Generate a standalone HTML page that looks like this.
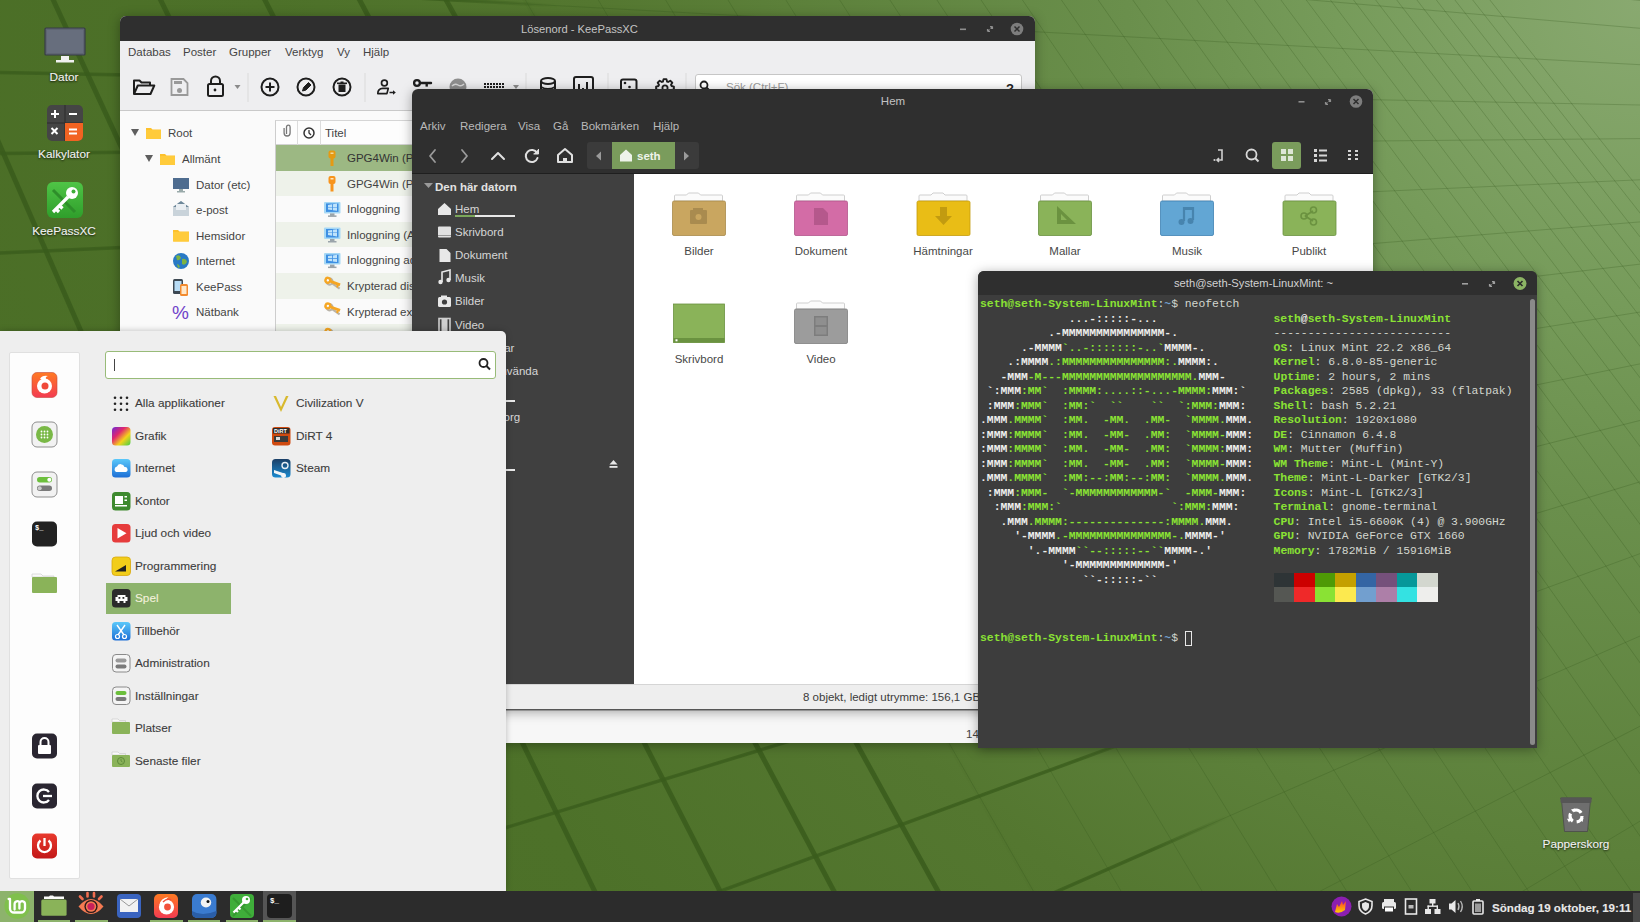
<!DOCTYPE html>
<html><head><meta charset="utf-8">
<style>
*{box-sizing:border-box;margin:0;padding:0}
html,body{width:1640px;height:922px;overflow:hidden}
body{position:relative;font-family:"Liberation Sans",sans-serif;font-size:11.5px;background:#55802f}
.a{position:absolute}
.t{position:absolute;white-space:nowrap;line-height:1}
/* desktop */
#bg{left:0;top:0;width:1640px;height:922px;background:linear-gradient(200deg,#86a86a 0%,#6a9148 22%,#588535 45%,#4f7a2b 70%,#4b7528 100%)}
.dlabel{position:absolute;color:#f2f2f2;text-shadow:0 1px 2px #000c;font-size:11.8px;text-align:center;width:100px;margin-top:1.5px}
/* windows */
.win{position:absolute;overflow:hidden;border-radius:6px 6px 0 0;box-shadow:0 2px 12px rgba(0,0,0,.35)}
.title{position:absolute;left:0;top:0;right:0;height:25px;background:#2f2f2f;color:#c9c9c9;font-size:11.5px}
#menu .t,.dlabel,#panel .t{-webkit-text-stroke:0.1px currentColor}
#kp .t{margin-top:2px}#nemo .t,#menu .t{margin-top:1.5px}#panel .t{margin-top:2px}
.term{font-family:"Liberation Mono",monospace;font-size:11.38px;line-height:14.5px;color:#eeeeec;white-space:pre;margin:0}
.term b{font-weight:bold}.term .w{color:#eeeeec}.term .g{color:#8ae234}.term .n{color:#d3d7cf;font-weight:normal}.term .bl{color:#729fcf;font-weight:bold}
</style></head>
<body>
<svg class="a" style="left:0;top:0" width="1640" height="922" id="bgsvg">
<defs>
<radialGradient id="bgr" gradientUnits="userSpaceOnUse" cx="1640" cy="0" r="1900">
<stop offset="0" stop-color="#89a970"/><stop offset="0.16" stop-color="#769b5a"/><stop offset="0.27" stop-color="#6a8f4c"/>
<stop offset="0.45" stop-color="#5c803a"/><stop offset="0.55" stop-color="#547730"/><stop offset="0.72" stop-color="#4d7129"/><stop offset="1" stop-color="#4a6d25"/>
</radialGradient>
<linearGradient id="mgB" gradientUnits="userSpaceOnUse" x1="455.2" y1="27.7" x2="524.8" y2="-11.7"><stop offset="0" stop-color="#fff"/><stop offset="1" stop-color="#000"/></linearGradient>
<linearGradient id="mgA" gradientUnits="userSpaceOnUse" x1="469.2" y1="25.5" x2="530.8" y2="-25.5"><stop offset="0" stop-color="#fff"/><stop offset="1" stop-color="#000"/></linearGradient>
<mask id="smB" maskUnits="userSpaceOnUse" x="0" y="0" width="1640" height="922"><rect width="1640" height="922" fill="url(#mgB)"/></mask>
<mask id="smA" maskUnits="userSpaceOnUse" x="0" y="0" width="1640" height="922"><rect width="1640" height="922" fill="url(#mgA)"/></mask>
</defs>
<rect width="1640" height="922" fill="url(#bgr)"/>
<g fill="none" stroke="#34561a" stroke-opacity="0.26" stroke-width="1"><path d="M-20.0 -333.5L1660.0 -58.5 M-20.0 -258.9L1660.0 -28.4 M-20.0 -182.0L1660.0 2.7 M-20.0 -114.4L1660.0 30.0 M-20.0 -25.8L1660.0 65.8 M-20.0 72.1L1660.0 105.4 M-20.0 153.6L1660.0 138.4 M-20.0 253.9L1660.0 178.9 M-20.0 356.4L1660.0 220.3 M-20.0 458.9L1660.0 261.8 M-20.0 575.5L1660.0 308.9 M-20.0 701.3L1660.0 359.8 M-20.0 838.8L1660.0 415.4 M-20.0 988.0L1660.0 475.7 M-20.0 1162.8L1660.0 546.3 M-20.0 1363.2L1660.0 627.3 M-20.0 1582.3L1660.0 715.9 M-20.0 1813.0L1660.0 809.2 M-20.0 2067.0L1660.0 911.9 M-20.0 2346.7L1660.0 1024.9"/><path d="M-576.3 -20.0L-265.0 950.0 M-394.4 -20.0L-42.8 950.0 M-234.0 -20.0L153.2 950.0 M-72.2 -20.0L350.8 950.0 M44.0 -20.0L492.8 950.0 M150.9 -20.0L623.3 950.0 M254.7 -20.0L750.1 950.0 M349.0 -20.0L865.3 950.0 M435.1 -20.0L970.5 950.0 M514.0 -20.0L1067.0 950.0 M586.6 -20.0L1155.6 950.0 M653.6 -20.0L1237.5 950.0 M715.7 -20.0L1313.3 950.0 M773.3 -20.0L1383.7 950.0 M826.9 -20.0L1449.2 950.0 M876.9 -20.0L1510.3 950.0 M923.7 -20.0L1567.5 950.0 M967.6 -20.0L1621.1 950.0 M1008.8 -20.0L1671.4 950.0 M1047.6 -20.0L1718.8 950.0 M1084.2 -20.0L1763.5 950.0 M1118.7 -20.0L1805.6 950.0 M1151.4 -20.0L1845.6 950.0 M1182.3 -20.0L1883.4 950.0 M1211.7 -20.0L1919.2 950.0 M1239.6 -20.0L1953.3 950.0 M1266.1 -20.0L1985.7 950.0 M1291.3 -20.0L2016.5 950.0 M1315.4 -20.0L2046.0 950.0 M1338.4 -20.0L2074.0 950.0 M1360.4 -20.0L2100.9 950.0 M1381.4 -20.0L2126.5 950.0 M1401.5 -20.0L2151.1 950.0 M1420.8 -20.0L2174.7 950.0 M1439.3 -20.0L2197.2 950.0 M1457.0 -20.0L2218.9 950.0 M1474.1 -20.0L2239.8 950.0"/></g>
<g mask="url(#smB)" fill="none" stroke="#3a5c1c" stroke-opacity="0.85" stroke-width="5"><path d="M-576.3 -20.0L-265.0 950.0 M-394.4 -20.0L-42.8 950.0 M-234.0 -20.0L153.2 950.0 M-72.2 -20.0L350.8 950.0 M44.0 -20.0L492.8 950.0 M150.9 -20.0L623.3 950.0 M254.7 -20.0L750.1 950.0 M349.0 -20.0L865.3 950.0 M435.1 -20.0L970.5 950.0 M514.0 -20.0L1067.0 950.0 M586.6 -20.0L1155.6 950.0 M653.6 -20.0L1237.5 950.0 M715.7 -20.0L1313.3 950.0 M773.3 -20.0L1383.7 950.0 M826.9 -20.0L1449.2 950.0 M876.9 -20.0L1510.3 950.0 M923.7 -20.0L1567.5 950.0 M967.6 -20.0L1621.1 950.0 M1008.8 -20.0L1671.4 950.0 M1047.6 -20.0L1718.8 950.0 M1084.2 -20.0L1763.5 950.0 M1118.7 -20.0L1805.6 950.0 M1151.4 -20.0L1845.6 950.0 M1182.3 -20.0L1883.4 950.0 M1211.7 -20.0L1919.2 950.0 M1239.6 -20.0L1953.3 950.0 M1266.1 -20.0L1985.7 950.0 M1291.3 -20.0L2016.5 950.0 M1315.4 -20.0L2046.0 950.0 M1338.4 -20.0L2074.0 950.0 M1360.4 -20.0L2100.9 950.0 M1381.4 -20.0L2126.5 950.0 M1401.5 -20.0L2151.1 950.0 M1420.8 -20.0L2174.7 950.0 M1439.3 -20.0L2197.2 950.0 M1457.0 -20.0L2218.9 950.0 M1474.1 -20.0L2239.8 950.0"/></g>
<g mask="url(#smA)" fill="none" stroke="#3a5c1c" stroke-opacity="0.75" stroke-width="3.5"><path d="M-20.0 -333.5L1660.0 -58.5 M-20.0 -258.9L1660.0 -28.4 M-20.0 -182.0L1660.0 2.7 M-20.0 -114.4L1660.0 30.0 M-20.0 -25.8L1660.0 65.8 M-20.0 72.1L1660.0 105.4 M-20.0 153.6L1660.0 138.4 M-20.0 253.9L1660.0 178.9 M-20.0 356.4L1660.0 220.3 M-20.0 458.9L1660.0 261.8 M-20.0 575.5L1660.0 308.9 M-20.0 701.3L1660.0 359.8 M-20.0 838.8L1660.0 415.4 M-20.0 988.0L1660.0 475.7 M-20.0 1162.8L1660.0 546.3 M-20.0 1363.2L1660.0 627.3 M-20.0 1582.3L1660.0 715.9 M-20.0 1813.0L1660.0 809.2 M-20.0 2067.0L1660.0 911.9 M-20.0 2346.7L1660.0 1024.9"/></g>
</svg>

<!-- Desktop icons -->
<svg class="a" style="left:0;top:0" width="1640" height="922" id="deskicons">
<rect x="45" y="28" width="40" height="27" rx="1" fill="#5e6472" stroke="#373c46" stroke-width="1.2"/><rect x="47" y="30" width="36" height="23" fill="#676e7d"/><rect x="61" y="56" width="8" height="4" fill="#f0f0f0"/><rect x="56" y="60" width="18" height="2.5" fill="#f0f0f0"/>
<rect x="47" y="105" width="36" height="36" rx="5" fill="#454545"/><path d="M65 105 v36 M47 123 h36" stroke="#2d2d2d" stroke-width="1"/><path d="M65 123 h18 v13 a5 5 0 0 1 -5 5 h-13 z" fill="#f26322"/><path d="M51 114 h8 M55 110 v8 M69 114 h8 M51.5 128 l6 6 M57.5 128 l-6 6 M69 129.5 h8 M69 133.5 h8" stroke="#fff" stroke-width="2"/>
<defs><linearGradient id="kpg" x1="0" y1="0" x2="0" y2="1"><stop offset="0" stop-color="#4fc446"/><stop offset="1" stop-color="#2f9e2b"/></linearGradient></defs><rect x="47" y="182" width="36" height="36" rx="6" fill="url(#kpg)"/><path d="M53 190 l22 22 M75 190 l-22 22" stroke="#2e8e2a" stroke-width="3"/><circle cx="72" cy="193" r="6" fill="#fff"/><circle cx="73.5" cy="191.5" r="2" fill="#3fae3a"/><path d="M68 197 l-15 15 M56 209 l3 3 M59.5 205.5 l3 3" stroke="#fff" stroke-width="3.2"/>
<path d="M1560.5 798 h31 l-1 2 l-3 31.5 h-23 l-3 -31.5 z" fill="#6e6e6e" stroke="#4a4a4a" stroke-width="0.8"/><rect x="1560.5" y="797.5" width="31" height="5.5" rx="1.5" fill="#565656"/><circle cx="1576" cy="816" r="6" fill="none" stroke="#fff" stroke-width="3.2" stroke-dasharray="8.5 4"/><path d="M1571 809.5 l4 -1 l-1.5 4 z M1583.5 818 l-1 4 l-3 -3 z M1569 822.5 l-2 -3.8 l4.2 0 z" fill="#fff"/>
</svg>
<div class="dlabel" style="left:14px;top:68px">Dator</div>
<div class="dlabel" style="left:14px;top:145px">Kalkylator</div>
<div class="dlabel" style="left:14px;top:222px">KeePassXC</div>
<div class="dlabel" style="left:1526px;top:835px">Papperskorg</div>
<!-- KeePassXC -->
<div id="kp" class="win" style="left:120px;top:16px;width:915px;height:727px;background:#fafafa">
<div class="title"></div>
<span class="t" style="left:401px;top:6px;font-size:11.2px;color:#c4c4c4;">Lösenord - KeePassXC</span>
<div class="a" style="left:0;top:25px;width:915px;height:70px;background:#eeeef0;border-bottom:1px solid #c9c9c9"></div>
<span class="t" style="left:8px;top:29px;font-size:11.5px;color:#444;">Databas</span>
<span class="t" style="left:63px;top:29px;font-size:11.5px;color:#444;">Poster</span>
<span class="t" style="left:109px;top:29px;font-size:11.5px;color:#444;">Grupper</span>
<span class="t" style="left:165px;top:29px;font-size:11.5px;color:#444;">Verktyg</span>
<span class="t" style="left:217px;top:29px;font-size:11.5px;color:#444;">Vy</span>
<span class="t" style="left:243px;top:29px;font-size:11.5px;color:#444;">Hjälp</span>
<div class="a" style="left:575px;top:58px;width:327px;height:27px;background:#fff;border:1px solid #c6c6c6;border-radius:3px"></div>
<span class="t" style="left:606px;top:64px;font-size:11.5px;color:#9a9a9a;">Sök (Ctrl+F)</span>
<span class="t" style="left:886px;top:64px;font-size:13px;color:#222;;font-weight:bold">?</span>
<span class="t" style="left:48px;top:110px;font-size:11.5px;color:#444;">Root</span>
<span class="t" style="left:62px;top:136px;font-size:11.5px;color:#444;">Allmänt</span>
<span class="t" style="left:76px;top:162px;font-size:11.5px;color:#444;">Dator (etc)</span>
<span class="t" style="left:76px;top:187px;font-size:11.5px;color:#444;">e-post</span>
<span class="t" style="left:76px;top:213px;font-size:11.5px;color:#444;">Hemsidor</span>
<span class="t" style="left:76px;top:238px;font-size:11.5px;color:#444;">Internet</span>
<span class="t" style="left:76px;top:264px;font-size:11.5px;color:#444;">KeePass</span>
<span class="t" style="left:76px;top:289px;font-size:11.5px;color:#444;">Nätbank</span>
<span class="t" style="left:76px;top:315px;font-size:11.5px;color:#444;">Personligt</span>
<div class="a" style="left:155px;top:104px;width:760px;height:640px;background:#fafafa;border-left:1px solid #cdcdcd;border-top:1px solid #d5d5d5"></div>
<div class="a" style="left:156px;top:105px;width:760px;height:24px;background:#fdfdfd;border-bottom:1px solid #d3d3d3"></div>
<div class="a" style="left:177px;top:105px;width:1px;height:24px;background:#dcdcdc"></div>
<div class="a" style="left:200px;top:105px;width:1px;height:24px;background:#dcdcdc"></div>
<span class="t" style="left:205px;top:110px;font-size:11.5px;color:#444;">Titel</span>
<div class="a" style="left:156px;top:129.0px;width:760px;height:25.6px;background:#9cb883"></div>
<span class="t" style="left:227px;top:135.0px;font-size:11.5px;color:#333;">GPG4Win (PC)</span>
<div class="a" style="left:156px;top:154.6px;width:760px;height:25.6px;background:#eef2ea"></div>
<span class="t" style="left:227px;top:160.6px;font-size:11.5px;color:#444;">GPG4Win (PC)</span>
<div class="a" style="left:156px;top:180.2px;width:760px;height:25.6px;background:#fafafa"></div>
<span class="t" style="left:227px;top:186.2px;font-size:11.5px;color:#444;">Inloggning</span>
<div class="a" style="left:156px;top:205.8px;width:760px;height:25.6px;background:#eef2ea"></div>
<span class="t" style="left:227px;top:211.8px;font-size:11.5px;color:#444;">Inloggning (Admin)</span>
<div class="a" style="left:156px;top:231.4px;width:760px;height:25.6px;background:#fafafa"></div>
<span class="t" style="left:227px;top:237.39999999999998px;font-size:11.5px;color:#444;">Inloggning admin</span>
<div class="a" style="left:156px;top:257.0px;width:760px;height:25.6px;background:#eef2ea"></div>
<span class="t" style="left:227px;top:263.0px;font-size:11.5px;color:#444;">Krypterad disk</span>
<div class="a" style="left:156px;top:282.6px;width:760px;height:25.6px;background:#fafafa"></div>
<span class="t" style="left:227px;top:288.6px;font-size:11.5px;color:#444;">Krypterad extern</span>
<div class="a" style="left:156px;top:308.2px;width:760px;height:25.6px;background:#eef2ea"></div>
<span class="t" style="left:227px;top:314.20000000000005px;font-size:11.5px;color:#444;">Krypterad</span>
<div class="a" style="left:0;top:694px;width:915px;height:33px;background:#f7f7f7;border-top:1px solid #bbb"></div>
<span class="t" style="left:846px;top:711px;font-size:11.5px;color:#444;">14</span>
<svg class="a" style="left:0;top:0" width="915" height="727" id="kpicons"><g transform="translate(-120,-16)">
<!-- title controls -->
<rect x="960" y="28.5" width="6" height="1.6" fill="#8e8e8e"/>
<path d="M987.5 31.5 l2 -2 M992.5 26.5 l-2 2 M987.5 31.5 v-2.5 M987.5 31.5 h2.5 M992.5 26.5 h-2.5 M992.5 26.5 v2.5" stroke="#8e8e8e" stroke-width="1.2" fill="none"/>
<circle cx="1017" cy="29" r="6.3" fill="#7d7d7d"/>
<path d="M1014.5 26.5 l5 5 M1019.5 26.5 l-5 5" stroke="#2f2f2f" stroke-width="1.5"/>
<!-- toolbar -->
<g fill="none" stroke="#1e1e1e" stroke-width="2" stroke-linejoin="round">
 <path d="M134 94 V80.5 h5.5 l2 2 h8.5 v2.5" /><path d="M134 94 l3.8 -8.5 h16.5 l-3.8 8.5 z"/>
 <rect x="208" y="84" width="15" height="12" rx="1.5"/><path d="M211 84 v-3 a4.5 4.5 0 0 1 9 0 v3"/>
 <circle cx="270" cy="87" r="8.5"/><path d="M270 82.5 v9 M265.5 87 h9"/>
 <circle cx="306" cy="87" r="8.5"/><path d="M302.5 91 l1 -3.5 l5 -5 l2.5 2.5 l-5 5 z" fill="#1e1e1e" stroke-width="1"/>
 <circle cx="342" cy="87" r="8.5"/>
 <circle cx="384.4" cy="83" r="2.9" stroke-width="1.7"/><path d="M377.8 93.6 q0 -5 5 -5.2 h5.5 l-1.4 5.2 z" stroke-width="1.7"/>
</g>
<circle cx="215" cy="90" r="1.4" fill="#1e1e1e"/>
<rect x="338.5" y="84.5" width="7" height="7.5" fill="#1e1e1e"/><rect x="337" y="82.5" width="10" height="1.6" fill="#1e1e1e"/><rect x="340.5" y="81.5" width="3" height="1.5" fill="#1e1e1e"/>
<path d="M389.5 92.5 h4.5" stroke="#1e1e1e" stroke-width="1.6"/><path d="M393 90.3 l2.8 2.2 l-2.8 2.2 z" fill="#1e1e1e"/>
<path d="M234.5 85 h6 l-3 4 z" fill="#8a8a8a"/>
<rect x="247.5" y="73" width="1" height="29" fill="#d9d9d9"/>
<rect x="364.5" y="73" width="1" height="29" fill="#d9d9d9"/>
<rect x="525.5" y="73" width="1" height="29" fill="#d9d9d9"/>
<rect x="607.5" y="73" width="1" height="29" fill="#d9d9d9"/>
<rect x="685.5" y="73" width="1" height="29" fill="#d9d9d9"/>
<!-- save disabled -->
<path d="M171.5 79 h12 l4 4 v12 h-16 z" fill="none" stroke="#999" stroke-width="1.8"/>
<rect x="174" y="81" width="8" height="3" fill="#999"/><circle cx="179.5" cy="90.5" r="2.5" fill="#999"/>
<!-- key -->
<circle cx="417" cy="83" r="2.9" fill="none" stroke="#1e1e1e" stroke-width="2.3"/>
<path d="M420 83 h11" stroke="#1e1e1e" stroke-width="2.4" fill="none" stroke-linecap="round"/><rect x="425.5" y="83" width="2.4" height="3.6" fill="#1e1e1e"/>
<!-- globe gray -->
<circle cx="458" cy="87" r="8.5" fill="#8e8e8e"/>
<path d="M452 86 q3 -3 6 -1 q3 2 6 -1 M451 90 q3 2 7 0" stroke="#d8d8d8" stroke-width="1.5" fill="none"/>
<!-- keyboard -->
<g fill="#1e1e1e"><rect x="484" y="83" width="20" height="2"/><rect x="484" y="86" width="20" height="2"/><rect x="484" y="89" width="20" height="2"/></g>
<g fill="#eeeef0"><rect x="486" y="83" width="1" height="8"/><rect x="489" y="83" width="1" height="8"/><rect x="492" y="83" width="1" height="8"/><rect x="495" y="83" width="1" height="8"/><rect x="498" y="83" width="1" height="8"/><rect x="501" y="83" width="1" height="8"/></g>
<path d="M513 85 h6 l-3 4 z" fill="#8a8a8a"/>
<!-- database -->
<g fill="none" stroke="#1e1e1e" stroke-width="2">
<ellipse cx="548" cy="81" rx="7" ry="3"/><path d="M541 81 v12 q7 4 14 0 v-12 M541 87 q7 4 14 0"/>
<rect x="574" y="77" width="19" height="19" rx="2"/>
<rect x="621" y="79.5" width="15.5" height="16" rx="2"/>
</g>
<g fill="#1e1e1e"><rect x="578" y="84" width="2" height="9"/><rect x="582" y="88" width="2" height="5"/><rect x="586" y="82" width="2" height="11"/></g>
<circle cx="625" cy="83" r="1.3" fill="#1e1e1e"/><circle cx="629.5" cy="87" r="1.3" fill="#1e1e1e"/><circle cx="632.5" cy="92" r="1.3" fill="#1e1e1e"/>
<!-- gear -->
<path d="M673.89 86.57 L673.89 89.43 L671.50 90.01 L671.01 91.17 L672.30 93.27 L670.27 95.30 L668.17 94.01 L667.01 94.50 L666.43 96.89 L663.57 96.89 L662.99 94.50 L661.83 94.01 L659.73 95.30 L657.70 93.27 L658.99 91.17 L658.50 90.01 L656.11 89.43 L656.11 86.57 L658.50 85.99 L658.99 84.83 L657.70 82.73 L659.73 80.70 L661.83 81.99 L662.99 81.50 L663.57 79.11 L666.43 79.11 L667.01 81.50 L668.17 81.99 L670.27 80.70 L672.30 82.73 L671.01 84.83 L671.50 85.99Z" fill="none" stroke="#1e1e1e" stroke-width="1.9" stroke-linejoin="round"/><circle cx="665" cy="88" r="2.6" fill="none" stroke="#1e1e1e" stroke-width="1.8"/>
<!-- search -->
<circle cx="704" cy="85" r="3.5" fill="none" stroke="#1e1e1e" stroke-width="1.8"/><path d="M706.5 87.5 l3 3" stroke="#1e1e1e" stroke-width="2"/>
<!-- tree -->
<path d="M131 129 h8 l-4 7 z" fill="#5e5e5e"/>
<path d="M145 155 h8 l-4 7 z" fill="#5e5e5e"/>
<path d="M146 128 h5 l1.5 1.5 h8.5 v9.5 h-15 z" fill="#fdc12c"/><rect x="146" y="130" width="15" height="9" rx="1" fill="#ffcb3b"/>
<path d="M160 154 h5 l1.5 1.5 h8.5 v9.5 h-15 z" fill="#fdc12c"/><rect x="160" y="156" width="15" height="9" rx="1" fill="#ffcb3b"/>
<rect x="173" y="178" width="16" height="11" fill="#4e6c8f"/><rect x="179" y="189" width="4" height="2" fill="#9aa"/><rect x="177" y="191" width="8" height="1.5" fill="#9aa"/>
<path d="M173 207 l8 -6 l8 6 v9 h-16 z" fill="#c9d3da"/><path d="M173 207 l8 -6 l8 6" fill="#6d8799"/><rect x="176" y="204" width="10" height="6" fill="#e9eef2"/>
<path d="M173 230 h5 l1.5 1.5 h9.5 v10 h-16 z" fill="#fdc12c"/><rect x="173" y="232" width="16" height="9.5" rx="1" fill="#ffcb3b"/>
<circle cx="181" cy="261" r="8" fill="#2879c5"/><path d="M176 256 q4 -2 5 2 q-2 3 -4 2 z M182 259 q4 -1 5 3 q-2 4 -5 2 z M177 264 q2 0 3 3 l-2 1 z" fill="#7cb342"/>
<rect x="173" y="279" width="10" height="15" rx="1.5" fill="#3d4852"/><rect x="174.5" y="281" width="7" height="10" fill="#b8dcf5"/>
<rect x="180" y="284" width="8" height="12" rx="1.5" fill="#f28a2e"/><rect x="181.5" y="286" width="5" height="8" fill="#ffe7c8"/>
<text x="172" y="318.5" font-family="Liberation Sans" font-size="19" fill="#7041c9">%</text>
<!-- table header icons -->
<path d="M286.5 134 v-7 a1.8 1.8 0 0 1 3.6 0 v6 a3 3 0 0 1 -6 0 v-5" fill="none" stroke="#777" stroke-width="1.3"/>
<circle cx="309" cy="133" r="5" fill="none" stroke="#333" stroke-width="1.5"/><path d="M309 130 v3 l2 2" stroke="#333" stroke-width="1.3" fill="none"/>
<!-- row icons -->
<g fill="#e59a14"><rect x="328.5" y="150.5" width="7" height="8" rx="2"/><rect x="330.5" y="157" width="3" height="9"/></g><rect x="330.5" y="152.5" width="3" height="1.5" fill="#f3d9a0"/>
<g fill="#f7941d"><rect x="328.5" y="176" width="7" height="8" rx="2"/><rect x="330.5" y="182.5" width="3" height="9"/></g><rect x="330.5" y="178" width="3" height="1.5" fill="#ffe8c0"/>
<rect x="324" y="201.9" width="16.5" height="11.5" rx="1" fill="#a6d8f5"/><rect x="326" y="203.4" width="12.5" height="8.5" fill="#3d8fe3"/><path d="M328 204.9 l4 -0.6 v2.6 h-4 z M332.8 204.2 l4.2 -0.6 v3.3 h-4.2 z M328 207.5 h4 v2.6 l-4 -0.6 z M332.8 207.5 h4.2 v3.3 l-4.2 -0.6 z" fill="#bfe3fb"/><rect x="330" y="213.4" width="4.5" height="2.5" fill="#9aa4aa"/><rect x="328" y="215.4" width="8.5" height="1.5" fill="#9aa4aa"/><rect x="324" y="227.5" width="16.5" height="11.5" rx="1" fill="#a6d8f5"/><rect x="326" y="229.0" width="12.5" height="8.5" fill="#3d8fe3"/><path d="M328 230.5 l4 -0.6 v2.6 h-4 z M332.8 229.8 l4.2 -0.6 v3.3 h-4.2 z M328 233.1 h4 v2.6 l-4 -0.6 z M332.8 233.1 h4.2 v3.3 l-4.2 -0.6 z" fill="#bfe3fb"/><rect x="330" y="239.0" width="4.5" height="2.5" fill="#9aa4aa"/><rect x="328" y="241.0" width="8.5" height="1.5" fill="#9aa4aa"/><rect x="324" y="253.1" width="16.5" height="11.5" rx="1" fill="#a6d8f5"/><rect x="326" y="254.6" width="12.5" height="8.5" fill="#3d8fe3"/><path d="M328 256.1 l4 -0.6 v2.6 h-4 z M332.8 255.4 l4.2 -0.6 v3.3 h-4.2 z M328 258.7 h4 v2.6 l-4 -0.6 z M332.8 258.7 h4.2 v3.3 l-4.2 -0.6 z" fill="#bfe3fb"/><rect x="330" y="264.6" width="4.5" height="2.5" fill="#9aa4aa"/><rect x="328" y="266.6" width="8.5" height="1.5" fill="#9aa4aa"/><g transform="translate(331,286.2) rotate(35)"><circle cx="-4" cy="-3" r="3.2" fill="none" stroke="#b9b3a8" stroke-width="1.8"/><rect x="-1.5" y="-4" width="10" height="2.2" fill="#b9b3a8"/></g><g transform="translate(330,283.2) rotate(20)"><circle cx="-3" cy="-2" r="3.6" fill="#f5a623"/><circle cx="-3" cy="-2" r="1.2" fill="#fafafa"/><rect x="0" y="-3.3" width="10" height="2.8" fill="#f5a623"/><rect x="7" y="-1" width="2" height="2.5" fill="#f5a623"/></g><g transform="translate(331,311.8) rotate(35)"><circle cx="-4" cy="-3" r="3.2" fill="none" stroke="#b9b3a8" stroke-width="1.8"/><rect x="-1.5" y="-4" width="10" height="2.2" fill="#b9b3a8"/></g><g transform="translate(330,308.8) rotate(20)"><circle cx="-3" cy="-2" r="3.6" fill="#f5a623"/><circle cx="-3" cy="-2" r="1.2" fill="#fafafa"/><rect x="0" y="-3.3" width="10" height="2.8" fill="#f5a623"/><rect x="7" y="-1" width="2" height="2.5" fill="#f5a623"/></g><g transform="translate(331,337.4) rotate(35)"><circle cx="-4" cy="-3" r="3.2" fill="none" stroke="#b9b3a8" stroke-width="1.8"/><rect x="-1.5" y="-4" width="10" height="2.2" fill="#b9b3a8"/></g><g transform="translate(330,334.4) rotate(20)"><circle cx="-3" cy="-2" r="3.6" fill="#f5a623"/><circle cx="-3" cy="-2" r="1.2" fill="#fafafa"/><rect x="0" y="-3.3" width="10" height="2.8" fill="#f5a623"/><rect x="7" y="-1" width="2" height="2.5" fill="#f5a623"/></g>
</g></svg>
</div>
<!-- Nemo -->
<div id="nemo" class="win" style="left:412px;top:89px;width:961px;height:621px;background:#fff">
<div class="a" style="left:0;top:0;width:961px;height:85px;background:#2f2f2f"></div>
<div class="a" style="left:0;top:84px;width:961px;height:1px;background:#1f1f1f"></div>
<div class="a" style="left:0;top:85px;width:222px;height:510px;background:#404040"></div>
<div class="a" style="left:0;top:595px;width:961px;height:26px;background:#eeeeee;border-top:1px solid #d5d5d5;border-bottom:1px solid #555"></div>
<span class="t" style="left:421px;width:120px;text-align:center;top:5px;font-size:11.5px;color:#c2c2c2;">Hem</span>
<span class="t" style="left:8px;top:30px;font-size:11.5px;color:#b9b9b9;">Arkiv</span>
<span class="t" style="left:48px;top:30px;font-size:11.5px;color:#b9b9b9;">Redigera</span>
<span class="t" style="left:106px;top:30px;font-size:11.5px;color:#b9b9b9;">Visa</span>
<span class="t" style="left:141px;top:30px;font-size:11.5px;color:#b9b9b9;">Gå</span>
<span class="t" style="left:169px;top:30px;font-size:11.5px;color:#b9b9b9;">Bokmärken</span>
<span class="t" style="left:241px;top:30px;font-size:11.5px;color:#b9b9b9;">Hjälp</span>
<div class="a" style="left:175px;top:53px;width:112px;height:27px;background:#3b3b3b;border-radius:3px"></div>
<div class="a" style="left:200px;top:53px;width:63px;height:27px;background:#7a9c5c"></div>
<span class="t" style="left:225px;top:60px;font-size:11.5px;color:#eef3ea;font-weight:bold">seth</span>
<div class="a" style="left:860px;top:53px;width:29px;height:27px;background:#7a9c5c;border-radius:3px"></div>
<span class="t" style="left:23px;top:91px;font-size:11.5px;color:#e2e2e2;font-weight:bold">Den här datorn</span>
<span class="t" style="left:43px;top:113.6px;font-size:11.5px;color:#d6d6d6;">Hem</span>
<span class="t" style="left:43px;top:136.7px;font-size:11.5px;color:#d6d6d6;">Skrivbord</span>
<span class="t" style="left:43px;top:159.7px;font-size:11.5px;color:#d6d6d6;">Dokument</span>
<span class="t" style="left:43px;top:182.7px;font-size:11.5px;color:#d6d6d6;">Musik</span>
<span class="t" style="left:43px;top:205.8px;font-size:11.5px;color:#d6d6d6;">Bilder</span>
<span class="t" style="left:43px;top:229px;font-size:11.5px;color:#d6d6d6;">Video</span>
<span class="t" style="left:43px;top:252px;font-size:11.5px;color:#d6d6d6;">Hämtningar</span>
<span class="t" style="left:43px;top:275px;font-size:11.5px;color:#d6d6d6;">Senast använda</span>
<span class="t" style="left:43px;top:298px;font-size:11.5px;color:#d6d6d6;">Filsystem</span>
<span class="t" style="left:43px;top:321px;font-size:11.5px;color:#d6d6d6;">Papperskorg</span>
<span class="t" style="left:43px;top:345px;font-size:11.5px;color:#d6d6d6;">Enheter</span>
<span class="t" style="left:43px;top:368px;font-size:11.5px;color:#d6d6d6;">Disk</span>
<div class="a" style="left:43px;top:126px;width:60px;height:2px;background:#e8e8e8"></div>
<div class="a" style="left:43px;top:126px;width:20px;height:2px;background:#7ba65a"></div>
<div class="a" style="left:43px;top:311px;width:60px;height:2px;background:#e8e8e8"></div>
<div class="a" style="left:43px;top:380px;width:60px;height:2px;background:#e8e8e8"></div>
<span class="t" style="left:227px;width:120px;text-align:center;top:155.5px;font-size:11.5px;color:#484848;">Bilder</span>
<span class="t" style="left:349px;width:120px;text-align:center;top:155.5px;font-size:11.5px;color:#484848;">Dokument</span>
<span class="t" style="left:471px;width:120px;text-align:center;top:155.5px;font-size:11.5px;color:#484848;">Hämtningar</span>
<span class="t" style="left:593px;width:120px;text-align:center;top:155.5px;font-size:11.5px;color:#484848;">Mallar</span>
<span class="t" style="left:715px;width:120px;text-align:center;top:155.5px;font-size:11.5px;color:#484848;">Musik</span>
<span class="t" style="left:837px;width:120px;text-align:center;top:155.5px;font-size:11.5px;color:#484848;">Publikt</span>
<span class="t" style="left:227px;width:120px;text-align:center;top:263px;font-size:11.5px;color:#484848;">Skrivbord</span>
<span class="t" style="left:349px;width:120px;text-align:center;top:263px;font-size:11.5px;color:#484848;">Video</span>
<span class="t" style="left:391px;top:601px;font-size:11.5px;color:#3c3c3c;">8 objekt, ledigt utrymme: 156,1 GB</span>
<svg class="a" style="left:0;top:0" width="961" height="621" id="nemoicons"><g transform="translate(-412,-89)"><rect x="1298.5" y="101" width="6" height="1.6" fill="#8e8e8e"/><path d="M1325.5 104.5 l2 -2 M1330.5 99.5 l-2 2 M1325.5 104.5 v-2.5 M1325.5 104.5 h2.5 M1330.5 99.5 h-2.5 M1330.5 99.5 v2.5" stroke="#8e8e8e" stroke-width="1.2" fill="none"/><circle cx="1356" cy="101.5" r="6.3" fill="#7d7d7d"/><path d="M1353.5 99 l5 5 M1358.5 99 l-5 5" stroke="#2f2f2f" stroke-width="1.5"/><path d="M435 150 l-5 6 l5 6" stroke="#9a9a9a" stroke-width="1.8" fill="none" stroke-linecap="round" stroke-linejoin="round"/><path d="M462 150 l5 6 l-5 6" stroke="#9a9a9a" stroke-width="1.8" fill="none" stroke-linecap="round" stroke-linejoin="round"/><path d="M492 159 l6 -6 l6 6" stroke="#e0e0e0" stroke-width="2" fill="none" stroke-linecap="round" stroke-linejoin="round"/><path d="M537 153 a6 6 0 1 0 0.5 5" stroke="#e0e0e0" stroke-width="2" fill="none" stroke-linecap="round" stroke-linejoin="round"/><path d="M538.5 149 v5 h-5" fill="#e0e0e0" stroke="#e0e0e0" stroke-width="1"/><path d="M558 155 l7 -6 l7 6 v7 h-14 z" stroke="#e0e0e0" stroke-width="2" fill="none" stroke-linecap="round" stroke-linejoin="round"/><rect x="563" y="158" width="4" height="4" fill="#e0e0e0"/><path d="M601 151.5 v9 l-5 -4.5 z" fill="#9a9a9a"/><path d="M684 151.5 v9 l5 -4.5 z" fill="#9a9a9a"/><path d="M620 155 l6 -5.5 l6 5.5 v6.5 h-12 z" fill="#eef3ea"/><path d="M1218 150 h4 v10 h-5 m2 -2 l-2 2 l2 2" stroke="#d0d0d0" stroke-width="1.6" fill="none"/><circle cx="1214.5" cy="160" r="1.1" fill="#d0d0d0"/><circle cx="1251.5" cy="154.5" r="5" stroke="#d8d8d8" stroke-width="1.8" fill="none"/><path d="M1255 158 l3.5 3.5" stroke="#d8d8d8" stroke-width="2"/><g fill="#dde6d6"><rect x="1281" y="149" width="5" height="5"/><rect x="1288" y="149" width="5" height="5"/><rect x="1281" y="156" width="5" height="5"/><rect x="1288" y="156" width="5" height="5"/></g><g fill="#d5d5d5"><rect x="1314" y="149" width="3" height="3"/><rect x="1314" y="154" width="3" height="3"/><rect x="1314" y="159" width="3" height="3"/><rect x="1319" y="149.5" width="8" height="2"/><rect x="1319" y="154.5" width="8" height="2"/><rect x="1319" y="159.5" width="8" height="2"/></g><g fill="#d5d5d5"><rect x="1348" y="150" width="3" height="2"/><rect x="1348" y="154" width="3" height="2"/><rect x="1348" y="158" width="3" height="2"/><rect x="1355" y="150" width="3" height="2"/><rect x="1355" y="154" width="3" height="2"/><rect x="1355" y="158" width="3" height="2"/></g><path d="M424 183 h9 l-4.5 5 z" fill="#9a9a9a"/><path d="M438 209 l6.5 -6 l6.5 6 v6 h-13 z" fill="#e8e8e8"/><rect x="438" y="226.5" width="13" height="11" rx="1" fill="#e2e2e2"/><rect x="438" y="235" width="13" height="1" fill="#999"/><path d="M439.5 249 h7 l4 4 v9 h-11 z" fill="#e8e8e8"/><path d="M442 282 v-10 l8 -2 v10" stroke="#e8e8e8" stroke-width="1.6" fill="none"/><circle cx="440.5" cy="282" r="2.2" fill="#e8e8e8"/><circle cx="448.5" cy="280" r="2.2" fill="#e8e8e8"/><rect x="438" y="297" width="13" height="10" rx="1.5" fill="#e8e8e8"/><rect x="441" y="295.5" width="6" height="3" fill="#e8e8e8"/><circle cx="444.5" cy="302" r="2.6" fill="#404040"/><rect x="439" y="318.5" width="11" height="14" fill="none" stroke="#cfcfcf" stroke-width="1.6"/><rect x="441.5" y="319" width="6" height="13" fill="#cfcfcf"/><path d="M609.5 464.5 h8 l-4 -4.5 z" fill="#e8e8e8"/><rect x="609.5" y="466" width="8" height="1.8" fill="#e8e8e8"/><path d="M674.5 201 v-5 a1 1 0 0 1 1 -1 h11 l2 -2 h10 l2 2 h21 a1 1 0 0 1 1 1 v5 z" fill="#fbfbfb" stroke="#cfcfcf" stroke-width="1"/><rect x="672.5" y="201" width="53" height="34.5" rx="1.5" fill="#c9a660" stroke="#a88a4a" stroke-width="0.8"/><rect x="690" y="210" width="17" height="14" rx="1" fill="#a98b4f"/><rect x="693" y="208" width="10" height="3" fill="#a98b4f"/><circle cx="698.5" cy="217" r="3" fill="#c9a660"/><path d="M796.5 201 v-5 a1 1 0 0 1 1 -1 h11 l2 -2 h10 l2 2 h21 a1 1 0 0 1 1 1 v5 z" fill="#fbfbfb" stroke="#cfcfcf" stroke-width="1"/><rect x="794.5" y="201" width="53" height="34.5" rx="1.5" fill="#d36ca6" stroke="#b3558b" stroke-width="0.8"/><path d="M814 208 h9 l5 5 v12 h-14 z" fill="#b5588c"/><path d="M919.0 201 v-5 a1 1 0 0 1 1 -1 h11 l2 -2 h10 l2 2 h21 a1 1 0 0 1 1 1 v5 z" fill="#fbfbfb" stroke="#cfcfcf" stroke-width="1"/><rect x="917.0" y="201" width="53" height="34.5" rx="1.5" fill="#e9bd16" stroke="#c49c0c" stroke-width="0.8"/><path d="M940 207 h7 v9 h5 l-8.5 9 l-8.5 -9 h5 z" fill="#c29b10"/><path d="M1040.5 201 v-5 a1 1 0 0 1 1 -1 h11 l2 -2 h10 l2 2 h21 a1 1 0 0 1 1 1 v5 z" fill="#fbfbfb" stroke="#cfcfcf" stroke-width="1"/><rect x="1038.5" y="201" width="53" height="34.5" rx="1.5" fill="#8ab359" stroke="#6a9240" stroke-width="0.8"/><path d="M1057 206 v18 h19 z M1061 214 v6 h6 z" fill="#6b9240" fill-rule="evenodd"/><path d="M1162.5 201 v-5 a1 1 0 0 1 1 -1 h11 l2 -2 h10 l2 2 h21 a1 1 0 0 1 1 1 v5 z" fill="#fbfbfb" stroke="#cfcfcf" stroke-width="1"/><rect x="1160.5" y="201" width="53" height="34.5" rx="1.5" fill="#62a6d4" stroke="#3f82b3" stroke-width="0.8"/><path d="M1184 221 v-13 h9 v12" stroke="#4784ae" stroke-width="2.2" fill="none"/><rect x="1184" y="207" width="9" height="3" fill="#4784ae"/><circle cx="1181.5" cy="222" r="3" fill="#4784ae"/><circle cx="1190.5" cy="221" r="3" fill="#4784ae"/><path d="M1285.0 201 v-5 a1 1 0 0 1 1 -1 h11 l2 -2 h10 l2 2 h21 a1 1 0 0 1 1 1 v5 z" fill="#fbfbfb" stroke="#cfcfcf" stroke-width="1"/><rect x="1283.0" y="201" width="53" height="34.5" rx="1.5" fill="#8ab359" stroke="#6a9240" stroke-width="0.8"/><path d="M1305 216 l8 -5 M1305 216 l8 5" stroke="#6b9240" stroke-width="1.8"/><circle cx="1304" cy="216" r="3" fill="none" stroke="#6b9240" stroke-width="1.6"/><circle cx="1313.5" cy="210" r="3" fill="none" stroke="#6b9240" stroke-width="1.6"/><circle cx="1313.5" cy="222" r="3" fill="none" stroke="#6b9240" stroke-width="1.6"/><rect x="673.5" y="304" width="51" height="38.5" fill="#8ab359" stroke="#6a9240" stroke-width="0.8"/><rect x="673.5" y="338" width="51" height="4.5" fill="#6a9240"/><rect x="675.5" y="339.3" width="2" height="2" fill="#fff"/><path d="M796.5 309 v-5 a1 1 0 0 1 1 -1 h11 l2 -2 h10 l2 2 h21 a1 1 0 0 1 1 1 v5 z" fill="#fbfbfb" stroke="#cfcfcf" stroke-width="1"/><rect x="794.5" y="309" width="53" height="34.5" rx="1.5" fill="#9c9c9c" stroke="#7f7f7f" stroke-width="0.8"/><rect x="814" y="316" width="14" height="20" fill="#7d7d7d"/><rect x="815.5" y="317.5" width="11" height="7.5" fill="#8f8f8f"/><rect x="815.5" y="327" width="11" height="7.5" fill="#8f8f8f"/></g></svg>
</div>
<!-- Terminal -->
<div id="term" class="win" style="left:978px;top:271px;width:559px;height:477px;background:#3d3d3d">
<div class="title" style="height:24px"></div>
<span class="t" style="left:-4px;width:559px;text-align:center;top:6.5px;font-size:11.2px;color:#d2d2d2">seth@seth-System-LinuxMint: ~</span>
<pre class="a term" style="left:2px;top:26px"><b class="g">seth@seth-System-LinuxMint</b><span class="n">:</span><span class="bl">~</span><span class="n">$ neofetch</span>
<b class="w">             ...-:::::-...</b>                 <b class="g">seth</b><b class="w">@</b><b class="g">seth-System-LinuxMint</b>
<b class="w">          .-MMMMMMMMMMMMMMM-.</b>              <span class="n">--------------------------</span>
<b class="w">      .-MMMM</b><b class="g">`..-:::::::-..`</b><b class="w">MMMM-.</b>          <b class="g">OS</b><span class="n">: Linux Mint 22.2 x86_64</span>
<b class="w">    .:MMMM</b><b class="g">.:MMMMMMMMMMMMMMM:.</b><b class="w">MMMM:.</b>        <b class="g">Kernel</b><span class="n">: 6.8.0-85-generic</span>
<b class="w">   -MMM</b><b class="g">-M---MMMMMMMMMMMMMMMMMMM.</b><b class="w">MMM-</b>       <b class="g">Uptime</b><span class="n">: 2 hours, 2 mins</span>
<b class="w"> `:MMM</b><b class="g">:MM`  :MMMM:....::-...-MMMM:</b><b class="w">MMM:`</b>    <b class="g">Packages</b><span class="n">: 2585 (dpkg), 33 (flatpak)</span>
<b class="w"> :MMM</b><b class="g">:MMM`  :MM:`  ``    ``  `:MMM:</b><b class="w">MMM:</b>    <b class="g">Shell</b><span class="n">: bash 5.2.21</span>
<b class="w">.MMM</b><b class="g">.MMMM`  :MM.  -MM.  .MM-  `MMMM.</b><b class="w">MMM.</b>   <b class="g">Resolution</b><span class="n">: 1920x1080</span>
<b class="w">:MMM</b><b class="g">:MMMM`  :MM.  -MM-  .MM:  `MMMM-</b><b class="w">MMM:</b>   <b class="g">DE</b><span class="n">: Cinnamon 6.4.8</span>
<b class="w">:MMM</b><b class="g">:MMMM`  :MM.  -MM-  .MM:  `MMMM:</b><b class="w">MMM:</b>   <b class="g">WM</b><span class="n">: Mutter (Muffin)</span>
<b class="w">:MMM</b><b class="g">:MMMM`  :MM.  -MM-  .MM:  `MMMM-</b><b class="w">MMM:</b>   <b class="g">WM Theme</b><span class="n">: Mint-L (Mint-Y)</span>
<b class="w">.MMM</b><b class="g">.MMMM`  :MM:--:MM:--:MM:  `MMMM.</b><b class="w">MMM.</b>   <b class="g">Theme</b><span class="n">: Mint-L-Darker [GTK2/3]</span>
<b class="w"> :MMM</b><b class="g">:MMM-  `-MMMMMMMMMMMM-`  -MMM-</b><b class="w">MMM:</b>    <b class="g">Icons</b><span class="n">: Mint-L [GTK2/3]</span>
<b class="w">  :MMM</b><b class="g">:MMM:`                `:MMM:</b><b class="w">MMM:</b>     <b class="g">Terminal</b><span class="n">: gnome-terminal</span>
<b class="w">   .MMM</b><b class="g">.MMMM:--------------:MMMM.</b><b class="w">MMM.</b>      <b class="g">CPU</b><span class="n">: Intel i5-6600K (4) @ 3.900GHz</span>
<b class="w">     '-MMMM</b><b class="g">.-MMMMMMMMMMMMMMM-.</b><b class="w">MMMM-'</b>       <b class="g">GPU</b><span class="n">: NVIDIA GeForce GTX 1660</span>
<b class="w">       '.-MMMM</b><b class="g">``--:::::--``</b><b class="w">MMMM-.'</b>         <b class="g">Memory</b><span class="n">: 1782MiB / 15916MiB</span>
<b class="w">            '-MMMMMMMMMMMMM-'</b>
<b class="w">               ``-:::::-``</b>



<b class="g">seth@seth-System-LinuxMint</b><span class="n">:</span><span class="bl">~</span><span class="n">$ </span></pre>
<div class="a" style="left:295.69px;top:301.50px;width:20.79px;height:14.5px;background:#2e3436"></div>
<div class="a" style="left:316.18px;top:301.50px;width:20.79px;height:14.5px;background:#cc0000"></div>
<div class="a" style="left:336.67px;top:301.50px;width:20.79px;height:14.5px;background:#4e9a06"></div>
<div class="a" style="left:357.16px;top:301.50px;width:20.79px;height:14.5px;background:#c4a000"></div>
<div class="a" style="left:377.65px;top:301.50px;width:20.79px;height:14.5px;background:#3465a4"></div>
<div class="a" style="left:398.14px;top:301.50px;width:20.79px;height:14.5px;background:#75507b"></div>
<div class="a" style="left:418.63px;top:301.50px;width:20.79px;height:14.5px;background:#06989a"></div>
<div class="a" style="left:439.12px;top:301.50px;width:20.79px;height:14.5px;background:#d3d7cf"></div>
<div class="a" style="left:295.69px;top:316.00px;width:20.79px;height:14.5px;background:#555753"></div>
<div class="a" style="left:316.18px;top:316.00px;width:20.79px;height:14.5px;background:#ef2929"></div>
<div class="a" style="left:336.67px;top:316.00px;width:20.79px;height:14.5px;background:#8ae234"></div>
<div class="a" style="left:357.16px;top:316.00px;width:20.79px;height:14.5px;background:#fce94f"></div>
<div class="a" style="left:377.65px;top:316.00px;width:20.79px;height:14.5px;background:#729fcf"></div>
<div class="a" style="left:398.14px;top:316.00px;width:20.79px;height:14.5px;background:#ad7fa8"></div>
<div class="a" style="left:418.63px;top:316.00px;width:20.79px;height:14.5px;background:#34e2e2"></div>
<div class="a" style="left:439.12px;top:316.00px;width:20.79px;height:14.5px;background:#eeeeec"></div>
<div class="a" style="left:206.90px;top:360.00px;width:7px;height:14.5px;border:1px solid #e8e8e8"></div>
<div class="a" style="left:552px;top:28px;width:5px;height:446px;background:#8a8a8a;border-radius:3px"></div>
<svg class="a" style="left:0;top:0" width="559" height="30"><g transform="translate(-978,-271)"><rect x="1462" y="283" width="6" height="1.6" fill="#a0a0a0"/><path d="M1489.5 286.5 l2 -2 M1494.5 281.5 l-2 2 M1489.5 286.5 v-2.5 M1489.5 286.5 h2.5 M1494.5 281.5 h-2.5 M1494.5 281.5 v2.5" stroke="#a0a0a0" stroke-width="1.2" fill="none"/><circle cx="1520" cy="283.5" r="6.5" fill="#8cb464"/><path d="M1517.5 281 l5 5 M1522.5 281 l-5 5" stroke="#2a2a2a" stroke-width="1.6"/></g></svg>
</div>
<!-- Menu -->
<div id="menu" class="a" style="left:0;top:331px;width:506px;height:560px;background:#eeeeee;border-radius:0 5px 0 0;box-shadow:0 0 6px rgba(0,0,0,.25)">
<div class="a" style="left:9px;top:21px;width:71px;height:527px;background:#fdfdfd;border:1px solid #e0e0e0;border-radius:2px"></div>
<div class="a" style="left:105px;top:20px;width:391px;height:28px;background:#fff;border:1px solid #98bb78;border-radius:3px"></div>
<div class="a" style="left:113.5px;top:28px;width:1px;height:12px;background:#444"></div>
<div class="a" style="left:105.5px;top:251.5px;width:125.5px;height:31px;background:#8db36c"></div>
<span class="t" style="left:135px;top:65.80000000000001px;font-size:11.8px;color:#3c3c3c;">Alla applikationer</span>
<span class="t" style="left:135px;top:98px;font-size:11.8px;color:#3c3c3c;">Grafik</span>
<span class="t" style="left:135px;top:130.39999999999998px;font-size:11.8px;color:#3c3c3c;">Internet</span>
<span class="t" style="left:135px;top:163px;font-size:11.8px;color:#3c3c3c;">Kontor</span>
<span class="t" style="left:135px;top:195px;font-size:11.8px;color:#3c3c3c;">Ljud och video</span>
<span class="t" style="left:135px;top:228px;font-size:11.8px;color:#3c3c3c;">Programmering</span>
<span class="t" style="left:135px;top:260px;font-size:11.8px;color:#f4f1dc;">Spel</span>
<span class="t" style="left:135px;top:293px;font-size:11.8px;color:#3c3c3c;">Tillbehör</span>
<span class="t" style="left:135px;top:325px;font-size:11.8px;color:#3c3c3c;">Administration</span>
<span class="t" style="left:135px;top:358px;font-size:11.8px;color:#3c3c3c;">Inställningar</span>
<span class="t" style="left:135px;top:390px;font-size:11.8px;color:#3c3c3c;">Platser</span>
<span class="t" style="left:135px;top:423px;font-size:11.8px;color:#3c3c3c;">Senaste filer</span>
<span class="t" style="left:296px;top:65.80000000000001px;font-size:11.8px;color:#3c3c3c;">Civilization V</span>
<span class="t" style="left:296px;top:98px;font-size:11.8px;color:#3c3c3c;">DiRT 4</span>
<span class="t" style="left:296px;top:130.39999999999998px;font-size:11.8px;color:#3c3c3c;">Steam</span>
<svg class="a" style="left:0;top:0" width="506" height="560"><g transform="translate(0,-331)"><circle cx="483.5" cy="363" r="4" fill="none" stroke="#222" stroke-width="1.8"/><path d="M486.5 366 l3.5 3.5" stroke="#222" stroke-width="2"/><g fill="#222"><circle cx="115" cy="397.8" r="1.3"/><circle cx="115" cy="403.8" r="1.3"/><circle cx="115" cy="409.8" r="1.3"/><circle cx="121" cy="397.8" r="1.3"/><circle cx="121" cy="403.8" r="1.3"/><circle cx="121" cy="409.8" r="1.3"/><circle cx="127" cy="397.8" r="1.3"/><circle cx="127" cy="403.8" r="1.3"/><circle cx="127" cy="409.8" r="1.3"/></g><defs><linearGradient id="gr1" x1="0" y1="0" x2="1" y2="1"><stop offset="0" stop-color="#6a2bd8"/><stop offset=".35" stop-color="#e0266e"/><stop offset=".65" stop-color="#f4d21b"/><stop offset="1" stop-color="#3fcf4a"/></linearGradient><linearGradient id="gr2" x1="0" y1="0" x2="0" y2="1"><stop offset="0" stop-color="#5ac8fa"/><stop offset="1" stop-color="#1d6fd6"/></linearGradient></defs><rect x="112" y="427" width="18.5" height="18.5" rx="3.5" fill="url(#gr1)"/><rect x="112" y="459" width="18.5" height="18.5" rx="3.5" fill="url(#gr2)"/><path d="M116 472 a3 3 0 0 1 1 -5.5 a4 4 0 0 1 7.5 0.5 a2.5 2.5 0 0 1 1 5 z" fill="#fff"/><rect x="112" y="492" width="18.5" height="18.5" rx="3.5" fill="#3e8a2e"/><rect x="115" y="496" width="8" height="8" fill="#fff"/><rect x="115" y="505" width="12" height="1.5" fill="#fff"/><rect x="124.5" y="496" width="2.5" height="1.5" fill="#fff"/><rect x="124.5" y="499.5" width="2.5" height="1.5" fill="#fff"/><rect x="112" y="524" width="18.5" height="18.5" rx="3.5" fill="#e63c3c"/><path d="M117.5 528 l9 5.2 l-9 5.2 z" fill="#fff"/><rect x="112" y="557" width="18.5" height="18.5" rx="3.5" fill="#f2cd1a" stroke="#d8a70a" stroke-width="0.8"/><path d="M115 571.5 l11 -6.5 v6.5 z" fill="#222"/><rect x="112" y="589" width="18.5" height="18.5" rx="3.5" fill="#2b2b2b"/><path d="M115.5 601 v-4 h2 v-2 h8 v2 h2 v4 h-2 v2 h-2 v-2 h-4 v2 h-2 v-2 z" fill="#fff"/><rect x="118.5" y="597" width="1.8" height="1.8" fill="#2b2b2b"/><rect x="122.5" y="597" width="1.8" height="1.8" fill="#2b2b2b"/><rect x="112" y="622" width="18.5" height="18.5" rx="3.5" fill="url(#gr2)"/><path d="M117 625 l7 10 M125 625 l-7 10" stroke="#fff" stroke-width="1.4"/><circle cx="117.5" cy="636.5" r="2" fill="none" stroke="#fff" stroke-width="1.2"/><circle cx="124.5" cy="636.5" r="2" fill="none" stroke="#fff" stroke-width="1.2"/><rect x="112.5" y="654.5" width="17.5" height="17.5" rx="3.5" fill="#f4f4f4" stroke="#8a8a8a" stroke-width="1"/><rect x="115.5" y="658.5" width="11" height="4" rx="2" fill="#9a9a9a"/><rect x="115.5" y="664.5" width="11" height="4" rx="2" fill="#7a7a7a"/><rect x="112.5" y="687" width="17.5" height="17.5" rx="3.5" fill="#f4f4f4" stroke="#8a8a8a" stroke-width="1"/><rect x="115.5" y="691" width="11" height="4" rx="2" fill="#6cbf3c"/><rect x="115.5" y="697" width="11" height="4" rx="2" fill="#7a7a7a"/><path d="M112 722 v-3 h6 l1.5 1.5 h6 v1.5 z" fill="#fafafa" stroke="#ccc" stroke-width="0.7"/><rect x="112" y="722" width="18" height="12" rx="1" fill="#8ab359"/><path d="M112 755 v-3 h6 l1.5 1.5 h6 v1.5 z" fill="#fafafa" stroke="#ccc" stroke-width="0.7"/><rect x="112" y="755" width="18" height="12" rx="1" fill="#8ab359"/><circle cx="121" cy="761" r="3.5" fill="none" stroke="#5d8a3a" stroke-width="1"/><path d="M121 759 v2 l1.5 1" stroke="#5d8a3a" stroke-width="0.9" fill="none"/><path d="M273.5 396 l7.5 16 l7.5 -16 h-2.5 l-5 11 l-5 -11 z" fill="#d8b92e"/><rect x="272" y="427" width="18.5" height="18.5" rx="3" fill="#cf4a10"/><rect x="273" y="428" width="16.5" height="5.5" fill="#2a2a2a"/><text x="274" y="433" font-size="5.5" font-weight="bold" fill="#fff" font-family="Liberation Sans">DiRT</text><rect x="274" y="436" width="14" height="6" fill="#3a3a3a"/><rect x="276" y="437" width="4" height="3" fill="#ddd"/><defs><linearGradient id="gr3" x1="0" y1="0" x2="0" y2="1"><stop offset="0" stop-color="#1b3f66"/><stop offset="1" stop-color="#1a8ad0"/></linearGradient></defs><rect x="272" y="459" width="18.5" height="18.5" rx="3.5" fill="url(#gr3)"/><circle cx="285" cy="465.5" r="3" fill="none" stroke="#e8eef5" stroke-width="1.4"/><path d="M274 470 l9 3 a2.5 2.5 0 1 1 -2 2.5 l-7 -2.5 z" fill="#f2f5f8"/><defs><linearGradient id="ff" x1="0" y1="0" x2="0" y2="1"><stop offset="0" stop-color="#ff7a22"/><stop offset="1" stop-color="#f33b52"/></linearGradient></defs><rect x="32" y="372.5" width="25" height="25" rx="5" fill="url(#ff)" stroke="#c84a3a" stroke-width="0.6"/><circle cx="44.5" cy="386" r="7.5" fill="#fff"/><circle cx="45" cy="386" r="3.5" fill="#f04a3a"/><path d="M40 379 q2 -4 8 -3 q-3 1 -2 3 z" fill="#fff"/><rect x="32" y="422" width="25" height="25" rx="5" fill="#f2f2f2" stroke="#8f8f8f" stroke-width="1"/><circle cx="44.5" cy="434.5" r="8.5" fill="#79b846"/><circle cx="41.5" cy="431.5" r="0.9" fill="#fff"/><circle cx="41.5" cy="434.5" r="0.9" fill="#fff"/><circle cx="41.5" cy="437.5" r="0.9" fill="#fff"/><circle cx="44.5" cy="431.5" r="0.9" fill="#fff"/><circle cx="44.5" cy="434.5" r="0.9" fill="#fff"/><circle cx="44.5" cy="437.5" r="0.9" fill="#fff"/><circle cx="47.5" cy="431.5" r="0.9" fill="#fff"/><circle cx="47.5" cy="434.5" r="0.9" fill="#fff"/><circle cx="47.5" cy="437.5" r="0.9" fill="#fff"/><rect x="32" y="472" width="25" height="25" rx="5" fill="#f2f2f2" stroke="#8f8f8f" stroke-width="1"/><rect x="37" y="477" width="15" height="5.5" rx="2.75" fill="#6cbf3c"/><circle cx="49.3" cy="479.7" r="2" fill="#fff"/><rect x="37" y="485.5" width="15" height="5.5" rx="2.75" fill="#7a7a7a"/><circle cx="39.7" cy="488.2" r="2" fill="#ccc"/><rect x="32" y="521.5" width="25" height="25" rx="5" fill="#222"/><text x="35" y="530" font-size="7" fill="#fff" font-family="Liberation Mono" font-weight="bold">$_</text><path d="M32 577 v-3 h9 l2 2 h11 v1 z" fill="#fafafa" stroke="#cfcfcf" stroke-width="0.7"/><rect x="32" y="577" width="25" height="16" rx="1" fill="#8ab359"/><rect x="32" y="733.5" width="25" height="25" rx="5" fill="#2a2631"/><rect x="38" y="745" width="13" height="9" rx="1" fill="#fff"/><path d="M40.5 745 v-3 a4 4 0 0 1 8 0 v3" stroke="#fff" stroke-width="2" fill="none"/><rect x="32" y="783.5" width="25" height="25" rx="5" fill="#2a2631"/><path d="M49 792 a6.5 6.5 0 1 0 0 8" stroke="#fff" stroke-width="2.3" fill="none"/><path d="M43 796 h9" stroke="#fff" stroke-width="2.3"/><defs><linearGradient id="pw" x1="0" y1="0" x2="0" y2="1"><stop offset="0" stop-color="#e8392d"/><stop offset="1" stop-color="#c21818"/></linearGradient></defs><rect x="32" y="833.5" width="25" height="25" rx="5" fill="url(#pw)"/><path d="M40.5 840.5 a6.5 6.5 0 1 0 8 0" stroke="#fff" stroke-width="2.3" fill="none"/><path d="M44.5 838 v8" stroke="#fff" stroke-width="2.3"/></g></svg>
</div>
<!-- Taskbar -->
<div id="panel" class="a" style="left:0;top:891px;width:1640px;height:31px;background:#2c2c2c">
<div class="a" style="left:0;top:0;width:34px;height:31px;background:#8db36c"></div>
<div class="a" style="left:263px;top:0;width:33px;height:31px;background:#555"></div>
<div class="a" style="left:37.8px;top:29px;width:32.2px;height:2px;background:#8db36c"></div>
<div class="a" style="left:75px;top:29px;width:32.7px;height:2px;background:#8db36c"></div>
<div class="a" style="left:150px;top:29px;width:33px;height:2px;background:#8db36c"></div>
<div class="a" style="left:188px;top:29px;width:32px;height:2px;background:#8db36c"></div>
<div class="a" style="left:225.5px;top:29px;width:32.5px;height:2px;background:#8db36c"></div>
<div class="a" style="left:263px;top:29px;width:33px;height:2px;background:#8db36c"></div>
<div class="a" style="left:1633px;top:2px;width:7px;height:29px;background:#4a4a4a"></div>
<span class="t" style="left:1492px;top:8.5px;font-size:11.6px;color:#e8e8e8;font-weight:bold">Söndag 19 oktober, 19:11</span>
<svg class="a" style="left:0;top:0" width="1640" height="31"><g transform="translate(0,-891)"><circle cx="17.2" cy="906" r="12.8" fill="#7fc04c"/><path d="M8.6 899 h1.4 v9.5 a4 4 0 0 0 4 4 h7 a4 4 0 0 0 4 -4 v-4.5 a2.8 2.8 0 0 0 -5.2 -1.4 a2.8 2.8 0 0 0 -5.2 1.4 v5.5 M19.4 903 v5.5" stroke="#fff" stroke-width="2.3" fill="none" stroke-linejoin="round" stroke-linecap="round"/><path d="M44 899 v-2.5 h5 l1 -1 h3 l1 1 h10 v2.5 z" fill="#fafafa"/><rect x="41.3" y="899.5" width="25.3" height="16.3" rx="1.5" fill="#8ab359"/><g stroke="#f26d4f" stroke-width="2.6" stroke-linecap="round"><path d="M87.5 896.5 v-3.5 M94 896.5 v-3.5 M82.5 899 l-2.5 -2.5 M99 899 l2.5 -2.5"/></g><path d="M78.5 906.5 q12.5 -15 25 0 q-12.5 15 -25 0 z" fill="#f47a52"/><circle cx="91" cy="906.5" r="6.6" fill="#2a1a1a"/><circle cx="91" cy="906.5" r="5.2" fill="#f47a52"/><circle cx="91" cy="906.5" r="3.6" fill="#c8205a"/><rect x="117" y="894" width="24" height="24" rx="4" fill="#3a64c0"/><rect x="120" y="899" width="18" height="13" fill="#f2f2f2"/><path d="M120 899 l9 7 l9 -7" stroke="#999" stroke-width="1" fill="none"/><rect x="154" y="894" width="24" height="24" rx="5" fill="url(#ff2)"/><defs><linearGradient id="ff2" x1="0" y1="0" x2="0" y2="1"><stop offset="0" stop-color="#ff7a22"/><stop offset="1" stop-color="#f33b52"/></linearGradient></defs><circle cx="166.5" cy="907" r="7.6" fill="#fff"/><circle cx="167.5" cy="907" r="3.4" fill="#f2503a"/><path d="M159.5 905 q1 -7 9 -8 q-3 2 -2 4 z" fill="#fff"/><path d="M163 902 q4 -4 8 -2" stroke="#f2503a" stroke-width="1.4" fill="none"/><rect x="192" y="894" width="24.4" height="24" rx="5" fill="#3a7bd0"/><path d="M192 911 q10 6 24.4 0 v2 a5 5 0 0 1 -5 5 h-14.4 a5 5 0 0 1 -5 -5 z" fill="#2a5ea8"/><ellipse cx="206" cy="902.5" rx="5.2" ry="5" fill="#f2f2f2"/><circle cx="208" cy="901.5" r="1.5" fill="#111"/><rect x="230" y="894" width="24" height="24" rx="4" fill="#3fae3a"/><path d="M233 898 l18 18 M251 898 l-18 18" stroke="#359930" stroke-width="2"/><circle cx="246" cy="900" r="4" fill="#fff"/><circle cx="247" cy="899" r="1.3" fill="#3fae3a"/><path d="M243.5 902.5 l-10 10 M236 910 l2 2 M238.5 907.5 l2 2" stroke="#fff" stroke-width="2.2"/><rect x="267" y="894" width="25" height="24" rx="4" fill="#1e1e1e"/><text x="270" y="903" font-size="7.5" fill="#fff" font-family="Liberation Mono" font-weight="bold">$_</text><defs><linearGradient id="fl" x1="0" y1="1" x2="0" y2="0"><stop offset="0" stop-color="#ffcc00"/><stop offset="1" stop-color="#ff3c2e"/></linearGradient></defs><circle cx="1341.5" cy="906.5" r="10" fill="#8b1fb0"/><path d="M1335 912 l2 -8 l2 3 l3 -6 l1 4 l3 -4 l-1 9 q-5 4 -10 2 z" fill="url(#fl)"/><path d="M1365.5 899 l6.5 2.5 v4 q0 6 -6.5 8.5 q-6.5 -2.5 -6.5 -8.5 v-4 z" fill="none" stroke="#e8e8e8" stroke-width="1.6"/><path d="M1365.5 902 l3.5 1.4 v2.5 q0 3.5 -3.5 5 q-3.5 -1.5 -3.5 -5 v-2.5 z" fill="#e8e8e8"/><rect x="1382" y="902" width="14" height="7" rx="1.5" fill="#e8e8e8"/><rect x="1384" y="899" width="10" height="3" fill="#e8e8e8"/><rect x="1384.5" y="907" width="9" height="5" fill="#fff" stroke="#2c2c2c" stroke-width="1"/><rect x="1405.5" y="899" width="11" height="15" fill="none" stroke="#e8e8e8" stroke-width="1.6"/><rect x="1408.5" y="905" width="5" height="3.5" fill="#bbb"/><g fill="#e8e8e8"><rect x="1429.5" y="899" width="6" height="4.5"/><rect x="1425" y="909" width="6" height="5"/><rect x="1434.5" y="909" width="6" height="5"/><rect x="1432" y="903" width="1.4" height="3"/><rect x="1427.5" y="905.5" width="10.5" height="1.4"/><rect x="1427.5" y="905.5" width="1.4" height="3.5"/><rect x="1436.6" y="905.5" width="1.4" height="3.5"/></g><path d="M1449 903.5 h2.5 l4 -3.5 v13 l-4 -3.5 h-2.5 z" fill="#e8e8e8"/><path d="M1458 903 q2 3.5 0 7 M1460.5 901 q3.5 5.5 0 11" stroke="#bbb" stroke-width="1.3" fill="none"/><rect x="1473" y="901" width="10" height="13" rx="1" fill="none" stroke="#e8e8e8" stroke-width="1.6"/><rect x="1476" y="899" width="4" height="2" fill="#e8e8e8"/><rect x="1475" y="903.5" width="6" height="8.5" fill="#9a9a9a"/></g></svg>
</div>
</body></html>
